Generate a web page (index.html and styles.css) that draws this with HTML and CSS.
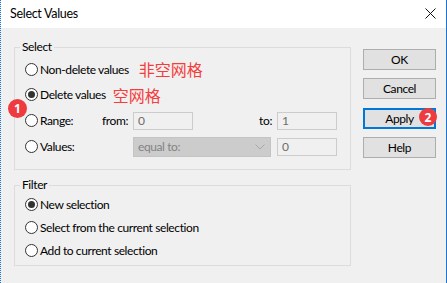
FILE: index.html
```html
<!DOCTYPE html>
<html lang="en">
<head>
<meta charset="utf-8">
<title>Select Values</title>
<link rel="stylesheet" href="styles.css">
</head>
<body>
<div class="dialog">
  <div class="titlebar">
    <span class="title">Select Values</span>
    <svg class="close" width="11" height="11" viewBox="0 0 11 11"><path d="M0.5 0.5 L10.5 10.5 M10.5 0.5 L0.5 10.5" stroke="#111" stroke-width="1" fill="none"/></svg>
  </div>
  <div class="content">
    <div class="groups">
      <fieldset class="group select-group">
        <legend>Select</legend>
        <div class="row r1">
          <label class="opt"><span class="radio"></span>Non-delete values</label>
          <span class="note note1">非空网格</span>
        </div>
        <div class="row r2">
          <label class="opt"><span class="radio checked"></span>Delete values</label>
          <span class="note note2">空网格</span>
        </div>
        <div class="row r3">
          <label class="opt fixed"><span class="radio"></span>Range:</label>
          <span class="lbl from">from:</span>
          <span class="field">0</span>
          <span class="lbl to">to:</span>
          <span class="field">1</span>
        </div>
        <div class="row r4">
          <label class="opt fixed"><span class="radio"></span>Values:</label>
          <span class="spacer"></span>
          <span class="combo"><span>equal to:</span>
            <svg class="chev" width="10" height="6" viewBox="0 0 10 6"><path d="M0.5 0.5 L5 5 L9.5 0.5" stroke="#a8a8a8" stroke-width="1" fill="none"/></svg>
          </span>
          <span class="field">0</span>
        </div>
      </fieldset>
      <fieldset class="group filter-group">
        <legend>Filter</legend>
        <div class="frow"><label class="opt"><span class="radio checked"></span>New selection</label></div>
        <div class="frow"><label class="opt"><span class="radio"></span>Select from the current selection</label></div>
        <div class="frow"><label class="opt"><span class="radio"></span>Add to current selection</label></div>
      </fieldset>
    </div>
    <div class="buttons">
      <button class="btn">OK</button>
      <button class="btn">Cancel</button>
      <button class="btn default">Apply</button>
      <button class="btn">Help</button>
    </div>
  </div>
  <span class="badge b1">1</span>
  <span class="badge b2">2</span>
</div>
</body>
</html>
```
FILE: styles.css
```css
* { box-sizing: border-box; }
html, body { margin: 0; padding: 0; }
body {
  font-family: Lato, "Noto Sans", sans-serif;
  font-size: 12px;
  letter-spacing: -0.4px;
  color: #000;
  background: #f0f0f0;
}
.dialog {
  position: relative;
  width: 447px;
  height: 283px;
  background: #f0f0f0;
  border-left: 1px dotted #1b74d0;
  border-right: 1px solid #1b74d0;
  overflow: hidden;
}
.titlebar {
  height: 28px;
  background: #fff;
  display: flex;
  align-items: center;
  justify-content: space-between;
  padding: 0 10px 1px 9px;
}
.title { font-size: 12.5px; line-height: 14px; letter-spacing: -0.3px; }
.content {
  display: flex;
  padding-left: 13px;
}
.groups { width: 337px; }
.group {
  margin: 0;
  padding: 0;
  border: 1px solid #dcdcdc;
  min-width: 0;
}
.group legend {
  padding: 0 2px;
  margin-left: 5px;
  line-height: 14px;
  height: 14px;
}
.select-group {
  margin-top: 12px;
  padding: 2px 0 10px 0;
}
.filter-group {
  margin-top: 8px;
  padding: 1px 0 3px 0;
}
.row, .frow {
  display: flex;
  align-items: center;
  padding-left: 10px;
}
.r1 { height: 26px; }
.r2 { height: 25px; }
.r3 { height: 27px; }
.r4 { height: 25px; }
.frow { height: 23px; }
.opt {
  display: flex;
  align-items: center;
  white-space: nowrap;
}
.opt.fixed { width: 72px; }
.radio {
  position: relative;
  width: 13px;
  height: 13px;
  border: 1px solid #333;
  border-radius: 50%;
  background: #fff;
  margin-right: 2px;
  flex: none;
}
.radio.checked::after {
  content: "";
  position: absolute;
  left: 2px;
  top: 2px;
  width: 7px;
  height: 7px;
  border-radius: 50%;
  background: #333;
}
.note {
  font-family: "Noto Sans CJK SC", sans-serif;
  font-size: 16px;
  line-height: 18px;
  letter-spacing: 0;
  color: #f43d3d;
}
.note1 { margin-left: 10px; }
.note2 { margin-left: 7px; }
.lbl { text-align: right; }
.from { width: 31px; margin-right: 5px; }
.to { width: 79px; margin-right: 5px; }
.field {
  width: 60px;
  height: 18px;
  border: 1px solid #cccccc;
  background: #f0f0f0;
  color: #6d6d6d;
  padding-left: 4px;
  line-height: 16px;
}
.spacer { width: 36px; }
.combo {
  width: 138px;
  height: 20px;
  margin-right: 6px;
  background: #cccccc;
  border: 1px solid #c4c4c4;
  color: #838383;
  display: flex;
  align-items: center;
  justify-content: space-between;
  padding: 0 5px 0 4px;
}
.buttons {
  display: flex;
  flex-direction: column;
  padding-top: 21px;
  margin-left: 12px;
}
.btn {
  width: 73px;
  height: 21px;
  margin: 0 0 8px 0;
  padding: 0;
  font-family: inherit;
  font-size: 12px;
  letter-spacing: inherit;
  color: #000;
  background: #e1e1e1;
  border: 1px solid #adadad;
}
.btn.default {
  border: 2px solid #0078d7;
  margin-top: 1px;
}
.badge {
  position: absolute;
  border-radius: 50%;
  background: #ee3b3f;
  color: #fff;
  font-family: "Noto Sans", sans-serif;
  font-weight: bold;
  font-size: 12px;
  letter-spacing: 0;
  display: flex;
  align-items: center;
  justify-content: center;
}
.b1 { left: 7px; top: 99px; width: 19px; height: 19px; }
.b2 { left: 418px; top: 108px; width: 18px; height: 18px; }
```
